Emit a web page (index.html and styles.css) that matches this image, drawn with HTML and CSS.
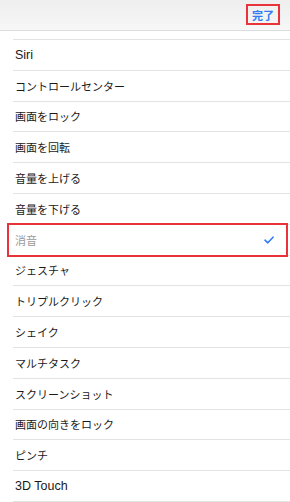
FILE: index.html
```html
<!DOCTYPE html>
<html lang="ja">
<head>
    <meta charset="UTF-8">
    <meta name="viewport" content="width=device-width, initial-scale=1.0">
    <title>AssistiveTouch</title>
    <link rel="stylesheet" href="styles.css">
</head>
<body>
    <div class="header">
        <button class="done">完了</button>
    </div>

    <ul class="list">
        <li class="row en">Siri</li>
        <li class="row">コントロールセンター</li>
        <li class="row">画面をロック</li>
        <li class="row">画面を回転</li>
        <li class="row">音量を上げる</li>
        <li class="row">音量を下げる</li>
        <li class="row selected">
            <span>消音</span>
            <svg class="check" width="10" height="8" viewBox="0 0 10 8">
                <path d="M1 4.2 L3.8 6.8 L9 1.2" fill="none" stroke="#2f7cf6" stroke-width="1.6" stroke-linecap="round" stroke-linejoin="round"/>
            </svg>
        </li>
        <li class="row">ジェスチャ</li>
        <li class="row">トリプルクリック</li>
        <li class="row">シェイク</li>
        <li class="row">マルチタスク</li>
        <li class="row">スクリーンショット</li>
        <li class="row">画面の向きをロック</li>
        <li class="row">ピンチ</li>
        <li class="row en">3D Touch</li>
    </ul>
</body>
</html>
```

FILE: styles.css
```css
body {
    font-family: "Noto Sans CJK JP", sans-serif;
    background: #fff;
    margin: 0;
    color: #1a1a1a;
}

.header {
    height: 30px;
    background: linear-gradient(#eeeeee, #f7f7f7);
    border-bottom: 1px solid #dcdcdc;
    display: flex;
    justify-content: flex-end;
    align-items: center;
    padding-right: 10px;
}

.done {
    font-family: inherit;
    font-size: 11px;
    font-weight: bold;
    color: #2f7cf6;
    background: none;
    border: 2px solid #e8333a;
    padding: 0 4px;
    height: 21px;
    line-height: 16px;
    margin-top: -1px;
    cursor: pointer;
}

.list {
    list-style: none;
    margin: 8px 0 0;
    padding: 0 0 0 13px;
}

.list::before {
    content: "";
    display: block;
    height: 1px;
    background: #e3e3e3;
}

.row {
    height: 29.8px;
    border-bottom: 1px solid #e3e3e3;
    display: flex;
    align-items: center;
    justify-content: space-between;
    padding: 0 16px 0 2px;
    font-size: 11px;
    position: relative;
}

.row.en {
    font-family: "Liberation Sans", sans-serif;
    font-size: 12.5px;
}

.row.selected {
    color: #9a9a9a;
}

.row.selected::after {
    content: "";
    position: absolute;
    left: -6px;
    right: 2px;
    top: -2px;
    bottom: -2px;
    border: 2px solid #e8333a;
}
```
